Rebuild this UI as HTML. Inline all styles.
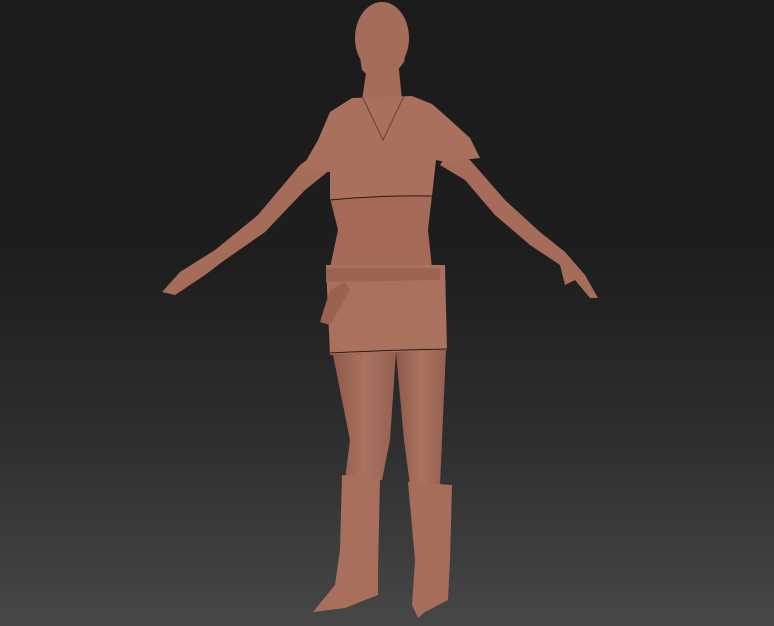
<!DOCTYPE html>
<html><head><style>
html,body{margin:0;padding:0;}
body{width:774px;height:626px;overflow:hidden;background:linear-gradient(#1c1c1c 0%,#1d1d1d 40%,#2e2e2e 70%,#474747 100%);}
svg{position:absolute;left:0;top:0;}
</style></head><body>
<svg width="774" height="626" viewBox="0 0 774 626">
<defs>
<linearGradient id="sk" x1="0" x2="1"><stop offset="0" stop-color="#8e5a4a"/><stop offset="0.5" stop-color="#ab7260"/><stop offset="1" stop-color="#94604f"/></linearGradient>
</defs>
<g fill="#a56c5a" stroke="none">
<path d="M320 150 L300 165 L258 215 L215 250 L180 272 L162 292 L175 295 L190 285 L205 275 L222 262 L265 232 L305 190 L330 170 Z"/>
<path d="M450 150 L470 160 L505 200 L540 232 L565 252 L585 275 L598 298 L590 298 L575 280 L565 285 L560 265 L530 245 L495 215 L465 180 L440 165 Z"/>
<path d="M368 60 L398 60 L402 100 L362 100 Z"/>
<ellipse cx="382" cy="38" rx="27" ry="36"/>
<path d="M358 45 L362 70 L375 82 L390 80 L404 62 L408 40 Z"/>
<path d="M352 98 L412 96 L432 104 L448 118 L470 138 L480 158 L445 162 L436 160 L432 196 L330 200 L330 172 L302 168 L318 140 L330 112 Z" fill="#a8705d"/>
<path d="M330 198 L432 195 L428 230 L432 268 L330 268 L338 230 Z" fill="#a46a57"/>
<path d="M326 265 L445 265 L447 350 L330 355 Z" fill="#aa715e"/>
<path d="M326 268 L440 268 L440 280 L326 282 Z" fill="#9c6452"/>
<path d="M330 290 L345 282 L350 290 L330 325 L320 322 Z" fill="#9a6350"/>
<path d="M333 355 L396 352 L390 440 L382 480 L345 480 L350 440 Z" fill="url(#sk)"/>
<path d="M396 352 L446 350 L442 440 L440 485 L410 485 L404 440 Z" fill="url(#sk)"/>
<path d="M342 475 L380 478 L378 570 L378 595 L365 600 L345 608 L313 612 L335 585 L340 550 Z" fill="#a8705c"/>
<path d="M408 482 L452 485 L450 560 L448 600 L425 612 L418 618 L412 605 L415 560 Z" fill="#a66d5a"/>
</g>
<path d="M362 96 L383 140 L404 96" stroke="#6a4034" stroke-width="1" fill="none"/>
<path d="M330 200 Q380 195 432 196" stroke="#2a1a14" stroke-width="1" fill="none"/>
<path d="M330 353 Q390 350 447 349" stroke="#2a1a14" stroke-width="1" fill="none"/>
</svg>
</body></html>
